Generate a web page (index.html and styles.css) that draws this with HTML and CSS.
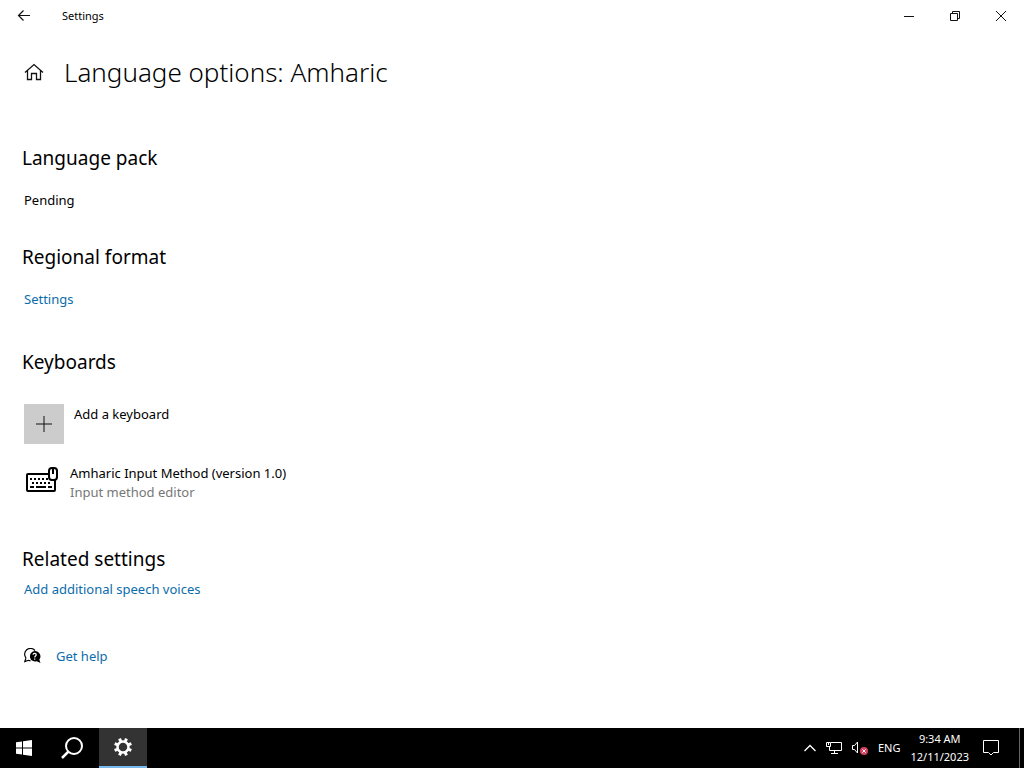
FILE: index.html
```html
<!DOCTYPE html>
<html lang="en">

<head>
    <meta charset="utf-8">
    <title>Settings</title>
    <link rel="stylesheet" href="styles.css">
</head>

<body>
    <header class="titlebar">
        <button class="back" type="button" aria-label="Back">
            <svg width="14" height="14" viewBox="0 0 14 14"><path d="M13 6.500H1.500M6.500 1.500l-5 5 5 5" stroke-width="1.200" /></svg>
        </button>
        <span class="app-name">Settings</span>
        <div class="window-buttons">
            <button type="button" aria-label="Minimize">
                <svg width="12" height="12" viewBox="0 0 12 12"><path d="M1 6.5h10" /></svg>
            </button>
            <button type="button" aria-label="Restore">
                <svg width="12" height="12" viewBox="0 0 12 12"><path d="M1.5 3.5h7v7h-7zM3.5 3.5v-2h7v7h-2" /></svg>
            </button>
            <button type="button" aria-label="Close">
                <svg width="12" height="12" viewBox="0 0 12 12"><path d="M1 1l10 10M11 1L1 11" /></svg>
            </button>
        </div>
    </header>

    <main>
        <div class="page-title">
            <button class="home" type="button" aria-label="Home">
                <svg width="20" height="18" viewBox="0 0 20 18"><path d="M1 9.500L10 1.500l9 8M3.500 7.500v9h4v-6h5v6h4v-9" stroke-width="1.300" /></svg>
            </button>
            <h1>Language options: Amharic</h1>
        </div>

        <section>
            <h2>Language pack</h2>
            <p>Pending</p>
        </section>

        <section>
            <h2>Regional format</h2>
            <p><a href="#">Settings</a></p>
        </section>

        <section class="keyboards">
            <h2>Keyboards</h2>
            <button class="add-keyboard" type="button">
                <span class="plus">
                    <svg width="16" height="16" viewBox="0 0 16 16"><path d="M8 0v16M0 8h16" /></svg>
                </span>
                <span>Add a keyboard</span>
            </button>
            <button class="keyboard" type="button">
                <svg width="32" height="26" viewBox="0 0 32 26">
                    <rect x="1" y="7" width="28" height="17" rx="1" fill="none" stroke="#000" stroke-width="2" />
                    <path d="M4 12h18M6 16h20" stroke="#000" stroke-width="2" stroke-dasharray="2 2" />
                    <path d="M4 20h4M10 20h10M22 20h4" stroke="#000" stroke-width="2" />
                    <rect x="23" y="1" width="8" height="12" rx="3" fill="#fff" stroke="#000" stroke-width="2" />
                    <path d="M27 1v6" stroke="#000" stroke-width="2" />
                </svg>
                <span class="keyboard-text">
                    <span>Amharic Input Method (version 1.0)</span>
                    <span class="muted">Input method editor</span>
                </span>
            </button>
        </section>

        <section class="related">
            <h2>Related settings</h2>
            <p><a href="#">Add additional speech voices</a></p>
        </section>

        <div class="help">
            <svg width="18" height="16" viewBox="0 0 18 16">
                <path d="M2 10L.8 13.500l3.700-1.200 2 .5M2 10a5.500 5.500 0 1 1 9-7.500" fill="none" stroke="#000" stroke-width="1.200" />
                <path d="M10.500 3a5.300 5.300 0 1 0 2.300 10.300l3.700 1.700-1.200-3.500A5.300 5.300 0 0 0 10.500 3z" />
                <path d="M9 6.800c.2-2 3.400-1.800 3.200.1-.1 1.100-1.500 1.200-1.500 2.600M10.700 10.500v1.300" fill="none" stroke="#fff" stroke-width="1.200" />
            </svg>
            <a href="#">Get help</a>
        </div>
    </main>

    <footer class="taskbar">
        <button class="task" type="button" aria-label="Start">
            <svg width="16" height="16" viewBox="0 0 16 16" fill="#fff"><path d="M0 2.300L6 1.400v6.100H0zM7 1.200L16 0v7.500H7zM0 8.500h6v6.100l-6-.9zM7 8.500h9V16l-9-1.200z" /></svg>
        </button>
        <button class="task search" type="button" aria-label="Search">
            <svg width="24" height="24" viewBox="0 0 24 24" fill="none" stroke="#fff" stroke-width="2"><circle cx="14" cy="10" r="8" /><path d="M8.500 15.500L2 22" stroke-width="2.500" /></svg>
        </button>
        <button class="task active" type="button" aria-label="Settings">
            <svg width="20" height="20" viewBox="0 0 20 20" fill="none" stroke="#fff">
                <circle cx="10" cy="10" r="5.500" stroke-width="2.500" />
                <path d="M10 1v3M10 16v3M1 10h3M16 10h3M3.600 3.600l2.200 2.200M14.200 14.200l2.200 2.200M3.600 16.400l2.200-2.200M14.200 5.800l2.200-2.200" stroke-width="3" transform="rotate(22.500 10 10)" />
            </svg>
        </button>
        <div class="tray">
            <button type="button" aria-label="Show hidden icons">
                <svg width="12" height="8" viewBox="0 0 12 8"><path d="M.5 7L6 1.500 11.500 7" stroke-width="1.300" /></svg>
            </button>
            <button type="button" aria-label="Network">
                <svg width="16" height="14" viewBox="0 0 16 14"><path d="M5 1.500h10.500v8h-12V5.500M8.500 9.500v3M5 12.500h7M.5 1.500h4v4h-4zM2.500 2v2" /></svg>
            </button>
            <button type="button" aria-label="Volume muted">
                <svg width="16" height="14" viewBox="0 0 16 14">
                    <path d="M.5 4.500h2L5.500 1v11l-3-3.500h-2z" />
                    <circle cx="12" cy="10" r="4" fill="#d8405a" stroke="none" />
                    <path d="M10.300 8.300l3.400 3.400M13.700 8.300l-3.400 3.400" />
                </svg>
            </button>
            <button type="button">ENG</button>
            <button class="clock" type="button"><span>9:34 AM</span><span>12/11/2023</span></button>
            <button class="notifications" type="button" aria-label="Notifications">
                <svg width="16" height="16" viewBox="0 0 16 16"><path d="M.5.5h15v12h-5L8 15l-2.500-2.500h-5z" /></svg>
            </button>
            <button class="show-desktop" type="button" aria-label="Show desktop"></button>
        </div>
    </footer>
</body>

</html>
```
FILE: styles.css
```css
* {
    box-sizing: border-box;
}

body {
    display: flex;
    flex-direction: column;
    min-height: 100vh;
    margin: 0;
    background: #fff;
    color: #000;
    font-family: "Noto Sans", "Open Sans", sans-serif;
    font-size: 13px;
    line-height: 20px;
}

button {
    padding: 0;
    border: none;
    background: none;
    color: inherit;
    font: inherit;
    text-align: left;
}

svg {
    display: block;
    flex-shrink: 0;
}

a {
    color: #0b6cab;
    text-decoration: none;
}

a:hover {
    color: #666;
}

h1,
h2,
p {
    margin: 0;
}

.titlebar {
    display: flex;
    align-items: center;
    height: 32px;
}

.titlebar svg,
.home svg,
.plus svg {
    fill: none;
    stroke: #111;
}

.back {
    display: flex;
    justify-content: center;
    width: 48px;
}

.app-name {
    padding-left: 14px;
    font-size: 11px;
}

.window-buttons {
    display: flex;
    margin-left: auto;
}

.window-buttons button {
    display: flex;
    align-items: center;
    justify-content: center;
    width: 46px;
    height: 32px;
}

main {
    flex: 1;
    padding: 20px 24px 32px;
}

.page-title {
    display: flex;
    align-items: center;
    gap: 20px;
    margin-bottom: 52px;
}

h1 {
    font-size: 26px;
    font-weight: 300;
    line-height: 40px;
}

h2 {
    margin-bottom: 18px;
    margin-left: -2px;
    font-size: 19px;
    font-weight: 400;
    line-height: 28px;
}

section {
    margin-bottom: 33px;
}

.keyboards {
    display: flex;
    flex-direction: column;
    align-items: flex-start;
    margin-top: 39px;
    margin-bottom: 42px;
}

.keyboards h2 {
    margin-bottom: 28px;
}

.add-keyboard {
    display: flex;
    gap: 10px;
    margin-bottom: 20px;
}

.plus {
    display: flex;
    align-items: center;
    justify-content: center;
    width: 40px;
    height: 40px;
    background: #ccc;
}

.keyboard {
    display: flex;
    gap: 12px;
    padding-left: 2px;
    line-height: 19px;
}

.keyboard svg {
    margin-top: 3px;
}

.keyboard-text {
    display: flex;
    flex-direction: column;
    padding-bottom: 1px;
}

.muted {
    color: #777;
}

.related {
    margin-bottom: 47px;
}

.related h2 {
    margin-bottom: 6px;
}

.help {
    display: flex;
    align-items: center;
    gap: 14px;
}

.taskbar {
    display: flex;
    height: 40px;
    background: #000;
    color: #fff;
    font-size: 12px;
}

.task {
    display: flex;
    align-items: center;
    justify-content: center;
    width: 48px;
}

.search {
    margin-right: 3px;
}

.active {
    background: #333;
    border-bottom: 2px solid #76b9ed;
}

.tray {
    display: flex;
    align-items: center;
    gap: 10px;
    margin-left: auto;
    font-size: 11px;
}

.tray svg {
    fill: none;
    stroke: #fff;
}

.clock {
    display: flex;
    flex-direction: column;
    align-items: center;
    line-height: 18px;
}

.notifications {
    margin: 0 10px 0 4px;
}

.show-desktop {
    width: 5px;
    height: 40px;
    border-left: 1px solid #666;
}
```
